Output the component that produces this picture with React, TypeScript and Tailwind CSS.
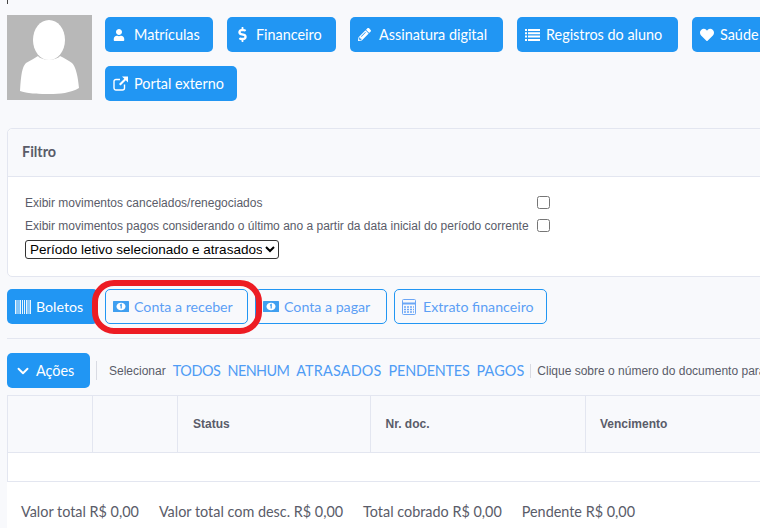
import type { ReactNode } from "react";
import { ChevronDown } from "lucide-react";
import { FaUser, FaDollarSign, FaPencilAlt, FaHeart } from "react-icons/fa";

function BlueButton({ icon, label, iconGap = "w-[21px]", width }: { icon: ReactNode; label: string; iconGap?: string; width: string }) {
  return (
    <button className={`flex h-[35px] shrink-0 items-center rounded-[5px] bg-[#2196f3] pl-2 text-[14.4px] text-white ${width}`}>
      <span className={`flex shrink-0 items-center ${iconGap}`}>{icon}</span>
      <span className="whitespace-nowrap">{label}</span>
    </button>
  );
}

function OutlineButton({ icon, label, width }: { icon: ReactNode; label: string; width: string }) {
  return (
    <button className={`flex h-[35px] shrink-0 items-center rounded-[5px] border border-[#2196f3] pl-[7px] text-[14.2px] text-[#5c9ff5] ${width}`}>
      <span className="flex w-[21px] shrink-0 items-center">{icon}</span>
      <span className="whitespace-nowrap">{label}</span>
    </button>
  );
}

function ListIcon() {
  return (
    <svg width="15" height="12" viewBox="0 0 15 12" fill="#fff">
      <path d="M0 0h2v2H0zM3 0h12v2H3zM0 3.3h2v2H0zM3 3.3h12v2H3zM0 6.6h2v2H0zM3 6.6h12v2H3zM0 10h2v2H0zM3 10h12v2H3z" />
    </svg>
  );
}

function ExternalIcon() {
  return (
    <svg width="15" height="15" viewBox="0 0 15 15" fill="none">
      <path d="M11.5 8.5V12a2 2 0 0 1-2 2H3a2 2 0 0 1-2-2V5.500a2 2 0 0 1 2-2h4" stroke="#fff" strokeWidth="1.4" />
      <path d="M9 0.500h6v6l-2.200-2.200-5.300 5.300-1.500-1.500 5.300-5.300z" fill="#fff" />
    </svg>
  );
}

function MoneyIcon() {
  return (
    <svg width="16" height="11" viewBox="0 0 16 11">
      <rect width="16" height="11" rx="0.5" fill="#3f9ff0" />
      <ellipse cx="8" cy="5.500" rx="4.500" ry="3.800" fill="#fff" />
      <path d="M7 4.300 8.200 3.500V7.500" fill="none" stroke="#3f9ff0" strokeWidth="1.200" />
    </svg>
  );
}

function CalcIcon() {
  return (
    <svg width="14" height="16" viewBox="0 0 14 16" fill="none" stroke="#6ba6f6">
      <rect x="0.5" y="0.5" width="13" height="15" rx="1" />
      <path d="M0.500 4.500H13.500" strokeWidth="2" />
      <path d="M2 8h10M2 10.500h10M2 13h10" strokeWidth="1.500" strokeDasharray="2 1" />
    </svg>
  );
}

function BarcodeIcon() {
  return (
    <svg width="16" height="14" viewBox="0 0 16 14" fill="#fff">
      <path d="M0 0h1.500v14H0zM2.500 0h1v14h-1zM4.500 0h1.500v14H4.500zM7 0h1v14H7zM9 0h1v14H9zM11 0h1.500v14H11zM13.500 0h1v14h-1zM15 0h1v14h-1z" fillOpacity="0.9" />
    </svg>
  );
}

export default function App() {
  const columns = [
    { label: "", width: "w-[85px]", pad: "pl-[15px]" },
    { label: "", width: "w-[85px]", pad: "pl-[15px]" },
    { label: "Status", width: "w-[193px]", pad: "pl-[15px]" },
    { label: "Nr. doc.", width: "w-[215px]", pad: "pl-[14.500px]" },
    { label: "Vencimento", width: "w-[300px]", pad: "pl-[14px]" },
  ];

  const links = [
    { label: "TODOS", tracking: "tracking-[-0.400px]" },
    { label: "NENHUM", tracking: "tracking-[-0.600px]" },
    { label: "ATRASADOS", tracking: "tracking-[0.200px]" },
    { label: "PENDENTES", tracking: "tracking-[-0.200px]" },
    { label: "PAGOS", tracking: "tracking-[0.100px]" },
  ];

  return (
    <div className="relative h-[528px] w-[760px] overflow-hidden bg-[#f8f9fc] font-['Lato','Noto_Sans',sans-serif] text-[#5a5c69]">
      {/* cursor tick */}
      <div className="ml-[7px] h-[4px] w-px bg-[#444]" />

      <div className="ml-[7px] mt-[11px] flex w-[900px] gap-[13px]">
        <div className="h-[85px] w-[85px] shrink-0 bg-[#b8b8b8]">
          <svg viewBox="0 0 85 85" className="h-full w-full" fill="#fff">
            <ellipse cx="42" cy="25" rx="16" ry="20" />
            <path d="M13 76C14 60 15 52 19 48C24 45 28 43 31 41C35 46 49 46 53 41C57 43 61 45 65 48C69 52 71 62 72 73C64 78 52 79 43 79C33 79 22 79 13 76Z" />
          </svg>
        </div>
        <div className="flex flex-col gap-[14px] pt-[2px]">
          <div className="flex gap-[14px]">
            <BlueButton width="w-[108px]" label="Matrículas" icon={<FaUser size={12} />} />
            <BlueButton width="w-[109px]" label="Financeiro" icon={<FaDollarSign size={15} />} />
            <BlueButton width="w-[153px]" label="Assinatura digital" icon={<FaPencilAlt size={13} />} />
            <BlueButton width="w-[161px]" label="Registros do aluno" icon={<ListIcon />} />
            <BlueButton width="w-[120px]" iconGap="w-[20px]" label="Saúde" icon={<FaHeart size={14} />} />
          </div>
          <BlueButton width="w-[132px]" label="Portal externo" icon={<ExternalIcon />} />
        </div>
      </div>

      {/* Filtro card */}
      <div className="ml-[7px] mt-[27px] w-[900px] rounded-[5px] border border-[#e3e6f0] bg-white">
        <div className="flex h-[48px] items-center rounded-t-[5px] border-b border-[#e3e6f0] bg-[#f8f9fc] pb-px pl-[14px] text-[14.4px] font-bold">
          Filtro
        </div>
        <div className="h-[99px] pl-[17px] pt-[14px] font-['Liberation_Sans',sans-serif] text-[12px]">
          <div className="flex h-[23px] items-center">
            <span className="w-[512px] whitespace-nowrap">Exibir movimentos cancelados/renegociados</span>
            <input type="checkbox" className="m-0 h-[13px] w-[13px]" />
          </div>
          <div className="flex h-[23px] items-center">
            <span className="w-[512px] whitespace-nowrap">Exibir movimentos pagos considerando o último ano a partir da data inicial do período corrente</span>
            <input type="checkbox" className="m-0 h-[13px] w-[13px]" />
          </div>
          <select className="mt-[3px] h-[19px] w-[254px] rounded-[3px] border border-[#333] bg-white text-[13.500px] text-black">
            <option>Período letivo selecionado e atrasados</option>
          </select>
        </div>
      </div>

      {/* Abas */}
      <div className="ml-[7px] mt-[12px] flex w-[900px] gap-[7px] border-b border-[#e3e6f0] pb-[14px]">
        <button className="flex h-[35px] w-[91px] shrink-0 items-center rounded-[5px] bg-[#2196f3] pl-2 text-[14.2px] text-white">
          <BarcodeIcon />
          <span className="ml-[5px]">Boletos</span>
        </button>
        <OutlineButton width="w-[143px]" label="Conta a receber" icon={<MoneyIcon />} />
        <OutlineButton width="w-[132px]" label="Conta a pagar" icon={<MoneyIcon />} />
        <OutlineButton width="w-[153px]" label="Extrato financeiro" icon={<CalcIcon />} />
      </div>

      {/* Ações */}
      <div className="ml-[7px] mt-[14px] flex h-[35px] w-[900px] items-center">
        <button className="flex h-[35px] w-[83px] shrink-0 items-center rounded-[5px] bg-[#2196f3] pl-[7px] text-[14.4px] text-white">
          <ChevronDown size={18} strokeWidth={2.5} />
          <span className="ml-[4px]">Ações</span>
        </button>
        <div className="ml-[6px] h-[19px] w-px bg-[#d9dbe3]" />
        <span className="ml-[12px] font-['Liberation_Sans',sans-serif] text-[12px]">Selecionar</span>
        <div className="ml-[7px] flex gap-[7px] whitespace-nowrap text-[14.4px] text-[#4f9cf5]">
          {links.map((link) => (
            <a key={link.label} className={link.tracking}>{link.label}</a>
          ))}
        </div>
        <div className="ml-[6px] h-[14px] w-px bg-[#d9dbe3]" />
        <span className="ml-[6px] whitespace-nowrap font-['Liberation_Sans',sans-serif] text-[12px]">Clique sobre o número do documento para visualizar</span>
      </div>

      {/* Tabela */}
      <div className="ml-[7px] mt-[7px] w-[900px] border-l border-t border-[#e3e6f0]">
        <div className="flex h-[57px] border-b border-[#e3e6f0]">
          {columns.map((col, i) => (
            <div key={i} className={`flex items-center border-r border-[#e3e6f0] font-['Liberation_Sans',sans-serif] text-[12px] font-bold ${col.pad} ${col.width}`}>
              {col.label}
            </div>
          ))}
        </div>
        <div className="h-[29px] border-b border-[#e3e6f0] bg-white" />
      </div>

      <div className="ml-[7px] flex h-[46px] w-[900px] gap-[20px] bg-white pl-[14px] pt-[19px] text-[14.4px]">
        <span>Valor total R$ 0,00</span>
        <span>Valor total com desc. R$ 0,00</span>
        <span>Total cobrado R$ 0,00</span>
        <span>Pendente R$ 0,00</span>
      </div>

      {/* Destaque vermelho */}
      <div className="pointer-events-none absolute left-[92px] top-[280px] h-[54px] w-[170px] rounded-[22px] border-[6px] border-[#ed1c24]" />
    </div>
  );
}
